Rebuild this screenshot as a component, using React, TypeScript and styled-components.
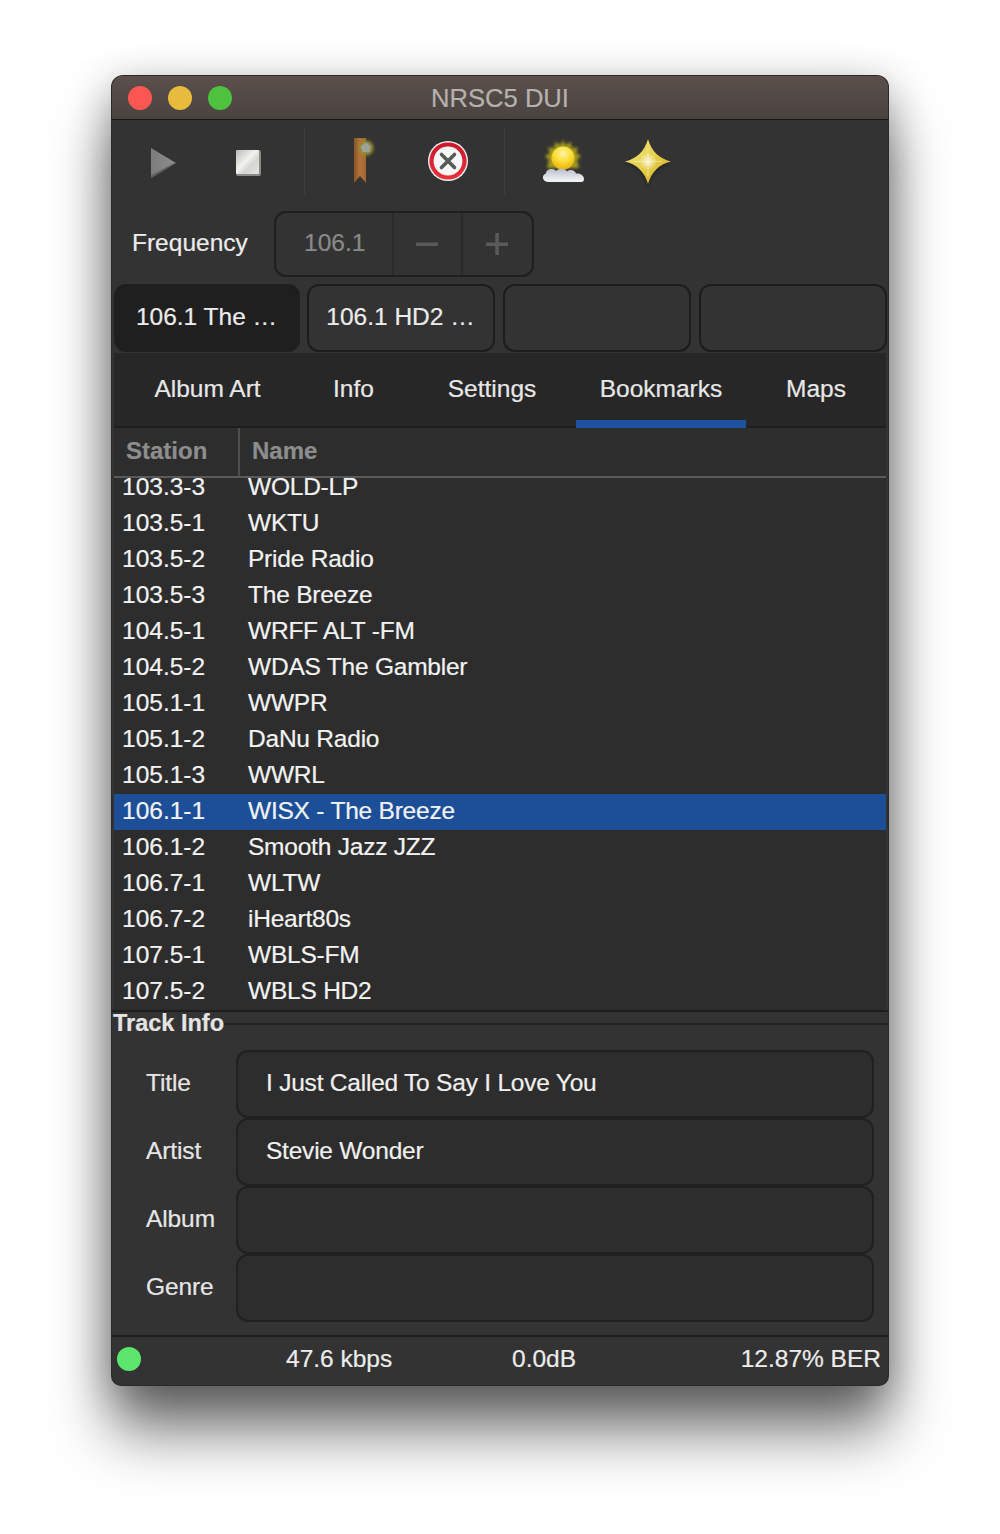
import React from "react";
import styled, { createGlobalStyle } from "styled-components";

const Global = createGlobalStyle`
  html, body { margin: 0; padding: 0; background: #fff; }
  body { font-family: "Liberation Sans", Arial, sans-serif; }
  #root { height: 1534px; box-sizing: border-box; padding: 76px 0 0 112px; overflow: hidden; }
`;

const Window = styled.div`
  width: 776px;
  height: 1309px;
  display: flex;
  flex-direction: column;
  background: #333;
  border-radius: 11px 11px 9px 9px;
  overflow: hidden;
  color: #ececec;
  font-size: 24.5px;
  -webkit-text-stroke: 0.2px;
  box-shadow: 0 0 0 1px #2a2a2a, 0 46px 60px rgba(0, 0, 0, 0.55), 0 8px 40px rgba(0, 0, 0, 0.3);
`;

const TitleBar = styled.div`
  position: relative;
  height: 43px;
  flex: none;
  display: flex;
  align-items: center;
  justify-content: center;
  background: linear-gradient(#5a4f4b, #4a4340);
  border-bottom: 1px solid #161616;
`;

const Title = styled.div`
  font-size: 25.6px;
  color: #b5b1ae;
  padding-top: 1px;
`;

const Lights = styled.div`
  position: absolute;
  left: 16px;
  top: 10px;
  display: flex;
  gap: 16px;
`;

const Light = styled.span<{ $c: string }>`
  width: 24px;
  height: 24px;
  border-radius: 50%;
  background: ${(p) => p.$c};
`;

const Toolbar = styled.div`
  height: 84px;
  flex: none;
  display: flex;
  align-items: center;
  padding-left: 8px;
`;

const ToolButton = styled.div`
  width: 85px;
  height: 84px;
  display: flex;
  align-items: center;
  justify-content: center;
`;

const Sep = styled.div`
  width: 1px;
  height: 68px;
  margin: 0 15px 0 14px;
  background: #3c3c3c;
`;

const FreqRow = styled.div`
  height: 66px;
  flex: none;
  margin: 7px 0;
  display: flex;
  align-items: center;
  padding-left: 20px;
`;

const FreqLabel = styled.div`
  width: 142px;
  padding-bottom: 2px;
`;

const Spin = styled.div`
  width: 260px;
  height: 66px;
  box-sizing: border-box;
  display: flex;
  border: 2px solid #1e1e1e;
  border-radius: 12px;
`;

const SpinValue = styled.div`
  width: 119px;
  display: flex;
  align-items: center;
  padding: 0 0 2px 28px;
  box-sizing: border-box;
  color: #8a8a8a;
  border-right: 2px solid #2a2a2a;
`;

const SpinBtn = styled.div<{ $last?: boolean }>`
  width: 70px;
  display: flex;
  align-items: center;
  justify-content: center;
  border-right: ${(p) => (p.$last ? "none" : "2px solid #2a2a2a")};
  box-sizing: border-box;
`;

const StationTabs = styled.div`
  height: 68px;
  flex: none;
  display: flex;
  padding-left: 2px;
`;

const StationTab = styled.div<{ $active?: boolean; $w: number; $mr: number }>`
  width: ${(p) => p.$w}px;
  margin-right: ${(p) => p.$mr}px;
  height: 68px;
  flex: none;
  box-sizing: border-box;
  display: flex;
  align-items: center;
  justify-content: center;
  padding: 0 1px 2px 0;
  border-radius: 12px;
  border: 2px solid ${(p) => (p.$active ? "#1f1f1f" : "#1c1c1c")};
  background: ${(p) => (p.$active ? "#1f1f1f" : "#333")};
`;

const NoteBar = styled.div`
  height: 75px;
  margin: 1px 2px 0;
  flex: none;
  box-sizing: border-box;
  display: flex;
  padding-left: 16px;
  background: #272727;
  border-bottom: 2px solid #1e1e1e;
`;

const NoteTab = styled.div<{ $w: number; $ml?: number; $active?: boolean }>`
  width: ${(p) => p.$w}px;
  margin-left: ${(p) => p.$ml ?? 0}px;
  height: 75px;
  box-sizing: border-box;
  display: flex;
  align-items: center;
  justify-content: center;
  padding-top: 5px;
  border-bottom: 8px solid ${(p) => (p.$active ? "#1c52a0" : "transparent")};
  color: #e8e8e8;
`;

const TableHead = styled.div`
  height: 50px;
  flex: none;
  margin: 0 2px;
  box-sizing: border-box;
  display: flex;
  background: #2d2d2d;
  border-bottom: 2px solid #5a5a5a;
  color: #8d8d8d;
  font-weight: bold;
  font-size: 24px;
`;

const HeadCell = styled.div<{ $w?: number }>`
  ${(p) => (p.$w ? `width: ${p.$w}px; border-right: 2px solid #4e4e4e;` : "flex: 1;")}
  box-sizing: border-box;
  padding: 0 0 2px 12px;
  display: flex;
  align-items: center;
`;

const ListClip = styled.div`
  height: 532px;
  flex: none;
  margin: 0 2px;
  overflow: hidden;
  background: #2d2d2d;
`;

const List = styled.div`
  margin-top: -8px;
`;

const Row = styled.div<{ $sel?: boolean }>`
  height: 36px;
  box-sizing: border-box;
  padding-bottom: 2px;
  display: flex;
  align-items: center;
  color: #f3f3f3;
  background: ${(p) => (p.$sel ? "#1c4f98" : "transparent")};
`;

const CellStation = styled.div`
  width: 134px;
  padding-left: 8px;
  box-sizing: border-box;
`;

const CellName = styled.div`
  letter-spacing: -0.22px;
`;

const Frame = styled.div`
  flex: 1;
  display: flex;
  flex-direction: column;
  border-top: 2px solid #1e1e1e;
`;

const FrameHead = styled.div`
  height: 24px;
  display: flex;
  align-items: flex-start;
  font-weight: bold;
  font-size: 23.5px;
  color: #e4e4e4;
  padding-left: 1px;
  line-height: 22px;
`;

const FrameLine = styled.div`
  flex: 1;
  margin-top: 11px;
  height: 2px;
  background: #222;
`;

const Fields = styled.div`
  padding: 14px 14px 0 34px;
  display: flex;
  flex-direction: column;
`;

const FieldRow = styled.div`
  display: flex;
  height: 68px;
  align-items: center;
`;

const FieldLabel = styled.div`
  width: 90px;
  flex: none;
  padding-bottom: 2px;
  color: #e6e6e6;
  letter-spacing: -0.1px;
`;

const Entry = styled.div`
  flex: 1;
  height: 68px;
  box-sizing: border-box;
  display: flex;
  align-items: center;
  padding: 0 0 3px 28px;
  background: #2d2d2d;
  border: 2px solid #202020;
  border-radius: 12px;
  color: #f0f0f0;
  letter-spacing: -0.22px;
`;

const Status = styled.div`
  margin-top: auto;
  height: 50px;
  flex: none;
  box-sizing: border-box;
  display: grid;
  grid-template-columns: 174px 226px 1fr auto;
  align-items: center;
  padding: 0 7px 4px 0;
  border-top: 2px solid #1e1e1e;
  color: #ececec;
`;

const Dot = styled.div`
  width: 24px;
  height: 24px;
  margin-left: 5px;
  border-radius: 50%;
  background: #5ce66c;
`;

const Svg = styled.svg`
  -webkit-text-stroke: 0;
`;

const PlayIcon = () => (
  <Svg width="48" height="48" viewBox="0 0 48 48">
    <defs>
      <linearGradient id="pl" x1="0" y1="0" x2="1" y2="0">
        <stop offset="0" stopColor="#7c7c7c" />
        <stop offset="1" stopColor="#8f8f8f" />
      </linearGradient>
    </defs>
    <path d="M12 10 L37 25 L12 40 Z" fill="url(#pl)" />
    <path d="M12 37.500 L12 40 L37 25 L35 25 Z" fill="#5f5f5f" />
  </Svg>
);

const StopIcon = () => (
  <Svg width="48" height="48" viewBox="0 0 48 48">
    <defs>
      <linearGradient id="st" x1="0" y1="0" x2="1" y2="1">
        <stop offset="0" stopColor="#b8bab6" />
        <stop offset="0.45" stopColor="#f2f2ef" />
        <stop offset="0.65" stopColor="#d4d5d1" />
        <stop offset="1" stopColor="#e6e6e3" />
      </linearGradient>
    </defs>
    <rect x="12" y="12" width="25" height="26" rx="2" fill="#8a8a8a" />
    <rect x="12" y="12" width="23" height="24" rx="1" fill="url(#st)" />
  </Svg>
);

const BookmarkIcon = () => (
  <Svg width="48" height="56" viewBox="0 0 48 56">
    <defs>
      <linearGradient id="bm" x1="0" y1="0" x2="1" y2="0">
        <stop offset="0" stopColor="#8a5526" />
        <stop offset="0.5" stopColor="#b4713a" />
        <stop offset="1" stopColor="#a3662e" />
      </linearGradient>
      <filter id="gl" x="-50%" y="-50%" width="200%" height="200%">
        <feGaussianBlur stdDeviation="1.600" />
      </filter>
    </defs>
    <path d="M15 4 H27 V49 L21 42 L15 49 Z" fill="url(#bm)" />
    <circle cx="27" cy="14" r="7.500" fill="#8f8f38" filter="url(#gl)" />
    <path d="M27 8.500 L32 12.500 L30.500 18 H23.500 L22 12.500 Z" fill="#9ea19a" />
  </Svg>
);

const CloseIcon = () => (
  <Svg width="48" height="48" viewBox="0 0 48 48">
    <defs>
      <linearGradient id="cl" x1="0" y1="0" x2="0" y2="1">
        <stop offset="0" stopColor="#c9162a" />
        <stop offset="1" stopColor="#e8323c" />
      </linearGradient>
    </defs>
    <circle cx="24" cy="23" r="20" fill="#f1eeee" />
    <circle cx="24" cy="23" r="18.600" fill="url(#cl)" />
    <circle cx="24" cy="23" r="14.400" fill="#f6f6f6" />
    <path d="M17.500 16.500 L30.500 29.500 M30.500 16.500 L17.500 29.500" stroke="#555a58" strokeWidth="3.600" strokeLinecap="round" />
  </Svg>
);

const SunIcon = () => (
  <Svg width="56" height="56" viewBox="0 0 56 56">
    <defs>
      <radialGradient id="su" cx="0.5" cy="0.3" r="0.75">
        <stop offset="0" stopColor="#fff4a8" />
        <stop offset="0.5" stopColor="#fbdc30" />
        <stop offset="1" stopColor="#e8a80f" />
      </radialGradient>
      <linearGradient id="cd" x1="0" y1="0" x2="0" y2="1">
        <stop offset="0" stopColor="#b9bec8" />
        <stop offset="0.6" stopColor="#dfe2e8" />
        <stop offset="1" stopColor="#f4f5f7" />
      </linearGradient>
      <filter id="b1" x="-30%" y="-30%" width="160%" height="160%">
        <feGaussianBlur stdDeviation="1.500" />
      </filter>
      <filter id="b2" x="-10%" y="-10%" width="120%" height="120%">
        <feGaussianBlur stdDeviation="0.600" />
      </filter>
    </defs>
    <path
      d="M28 6 L30.500 11 L36 8 L36.500 14 L43 13.500 L41 19 L46 22 L42 26 L44 34 L12 34 L14 26 L10 22 L15 19 L13 13.500 L19.500 14 L20 8 L25.500 11 Z"
      fill="#a39a1e"
      filter="url(#b1)"
    />
    <circle cx="28" cy="24" r="11.500" fill="url(#su)" filter="url(#b2)" />
    <path
      d="M14 48 C7 48 6 41 11 39.500 C11 35 18 33.500 21 37 C24 34 30 34 32 37.500 C35 35 40 36 41 39.500 C46 39 49 42 49 45 C49 47 48 48 46 48 Z"
      fill="url(#cd)"
      filter="url(#b2)"
    />
  </Svg>
);

const StarIcon = () => (
  <Svg width="56" height="56" viewBox="0 0 56 56">
    <defs>
      <linearGradient id="sr" x1="0" y1="0" x2="1" y2="1">
        <stop offset="0" stopColor="#f3e889" />
        <stop offset="0.5" stopColor="#e6cf4a" />
        <stop offset="1" stopColor="#c9ac25" />
      </linearGradient>
      <radialGradient id="sg">
        <stop offset="0" stopColor="#fff" stopOpacity="0.85" />
        <stop offset="1" stopColor="#fff" stopOpacity="0" />
      </radialGradient>
      <filter id="b3" x="-20%" y="-20%" width="140%" height="140%">
        <feGaussianBlur stdDeviation="1.400" />
      </filter>
    </defs>
    <path d="M28 8 Q33 23 50 28 Q33 33 28 50 Q23 33 6 28 Q23 23 28 8 Z" fill="#1d1d1d" opacity="0.55" filter="url(#b3)" transform="translate(0 2)" />
    <path d="M28 5 Q33 23 51 27.500 Q33 32 28 50 Q23 32 5 27.500 Q23 23 28 5 Z" fill="url(#sr)" />
    <circle cx="28" cy="27.500" r="9" fill="url(#sg)" />
    <path d="M28 14 V42 M14 27.500 H42" stroke="#fff6c4" strokeWidth="1" opacity="0.6" />
  </Svg>
);

const stations: [string, string][] = [
  ["103.3-3", "WOLD-LP"],
  ["103.5-1", "WKTU"],
  ["103.5-2", "Pride Radio"],
  ["103.5-3", "The Breeze"],
  ["104.5-1", "WRFF ALT -FM"],
  ["104.5-2", "WDAS The Gambler"],
  ["105.1-1", "WWPR"],
  ["105.1-2", "DaNu Radio"],
  ["105.1-3", "WWRL"],
  ["106.1-1", "WISX - The Breeze"],
  ["106.1-2", "Smooth Jazz JZZ"],
  ["106.7-1", "WLTW"],
  ["106.7-2", "iHeart80s"],
  ["107.5-1", "WBLS-FM"],
  ["107.5-2", "WBLS HD2"],
];

const fields: [string, string][] = [
  ["Title", "I Just Called To Say I Love You"],
  ["Artist", "Stevie Wonder"],
  ["Album", ""],
  ["Genre", ""],
];

export default function App() {
  return (
    <>
      <Global />
      <Window>
        <TitleBar>
          <Lights>
            <Light $c="#fc5753" />
            <Light $c="#e9bb3c" />
            <Light $c="#4ec13f" />
          </Lights>
          <Title>NRSC5 DUI</Title>
        </TitleBar>
        <Toolbar>
          <ToolButton><PlayIcon /></ToolButton>
          <ToolButton><StopIcon /></ToolButton>
          <Sep />
          <ToolButton><BookmarkIcon /></ToolButton>
          <ToolButton><CloseIcon /></ToolButton>
          <Sep />
          <ToolButton><SunIcon /></ToolButton>
          <ToolButton><StarIcon /></ToolButton>
        </Toolbar>
        <FreqRow>
          <FreqLabel>Frequency</FreqLabel>
          <Spin>
            <SpinValue>106.1</SpinValue>
            <SpinBtn>
              <Svg width="22" height="22" viewBox="0 0 22 22">
                <rect x="0" y="9.500" width="22" height="3.500" fill="#5a5a5a" />
              </Svg>
            </SpinBtn>
            <SpinBtn $last>
              <Svg width="22" height="22" viewBox="0 0 22 22">
                <path d="M0 9.500 H22 V13 H0 Z M9.300 0 H12.800 V22 H9.300 Z" fill="#5a5a5a" />
              </Svg>
            </SpinBtn>
          </Spin>
        </FreqRow>
        <StationTabs>
          <StationTab $active $w={186} $mr={7}>106.1 The …</StationTab>
          <StationTab $w={188} $mr={8}>106.1 HD2 …</StationTab>
          <StationTab $w={188} $mr={8} />
          <StationTab $w={188} $mr={0} />
        </StationTabs>
        <NoteBar>
          <NoteTab $w={155}>Album Art</NoteTab>
          <NoteTab $w={137}>Info</NoteTab>
          <NoteTab $w={140}>Settings</NoteTab>
          <NoteTab $w={170} $ml={14} $active>Bookmarks</NoteTab>
          <NoteTab $w={140}>Maps</NoteTab>
        </NoteBar>
        <TableHead>
          <HeadCell $w={126}>Station</HeadCell>
          <HeadCell>Name</HeadCell>
        </TableHead>
        <ListClip>
          <List>
            {stations.map(([s, n]) => (
              <Row key={s} $sel={s === "106.1-1"}>
                <CellStation>{s}</CellStation>
                <CellName>{n}</CellName>
              </Row>
            ))}
          </List>
        </ListClip>
        <Frame>
          <FrameHead>
            <span>Track Info</span>
            <FrameLine />
          </FrameHead>
          <Fields>
            {fields.map(([l, v]) => (
              <FieldRow key={l}>
                <FieldLabel>{l}</FieldLabel>
                <Entry>{v}</Entry>
              </FieldRow>
            ))}
          </Fields>
          <Status>
            <Dot />
            <div>47.6 kbps</div>
            <div>0.0dB</div>
            <div>12.87% BER</div>
          </Status>
        </Frame>
      </Window>
    </>
  );
}
